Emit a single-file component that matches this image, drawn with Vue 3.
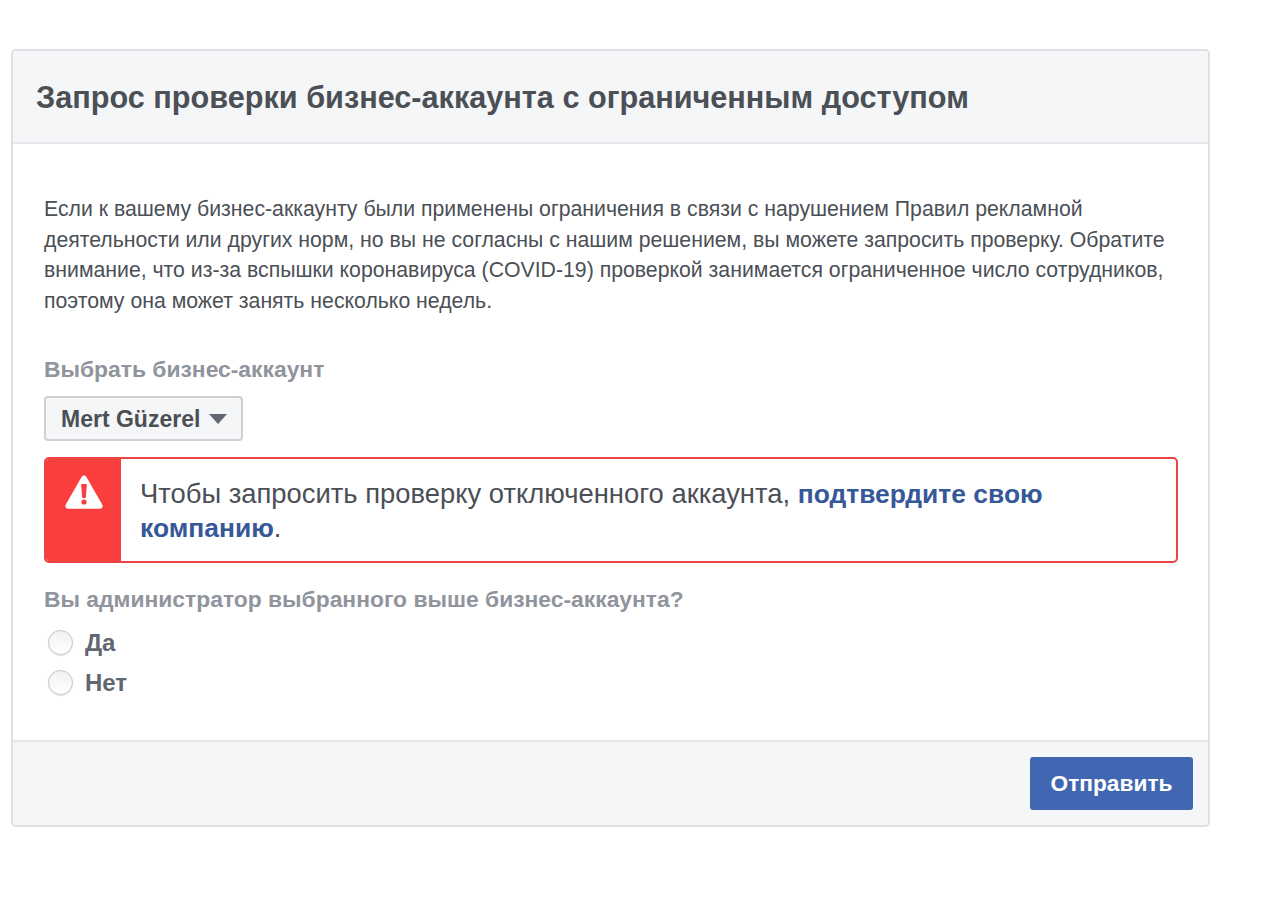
<script setup>
const options = ['Да', 'Нет']
</script>

<template>
  <div class="page">
    <section class="card">
      <header class="head"><h1>Запрос проверки бизнес-аккаунта с ограниченным доступом</h1></header>
      <div class="body">
        <p class="intro">Если к вашему бизнес-аккаунту были применены ограничения в связи с нарушением Правил рекламной<br>деятельности или других норм, но вы не согласны с нашим решением, вы можете запросить проверку. Обратите<br>внимание, что из-за вспышки коронавируса (COVID-19) проверкой занимается ограниченное число сотрудников,<br>поэтому она может занять несколько недель.</p>
        <div class="label first">Выбрать бизнес-аккаунт</div>
        <button class="select">Mert Güzerel<span class="caret"></span></button>
        <div class="alert">
          <div class="alert-icon">
            <svg width="40" height="36" viewBox="0 0 40 36">
              <path d="M20 1.500c1 0 1.800.5 2.400 1.500l15.800 27.600c1.100 2-.1 4.200-2.300 4.200H4.100c-2.200 0-3.400-2.200-2.300-4.200L17.600 3c.6-1 1.400-1.500 2.400-1.500z" fill="#fff"/>
              <path d="M17.700 10.500h4.600l-.9 13h-2.800z" fill="#fa3e3e" stroke="#fa3e3e" stroke-linejoin="round"/>
              <circle cx="20" cy="28" r="2.600" fill="#fa3e3e"/>
            </svg>
          </div>
          <div class="alert-text">Чтобы запросить проверку отключенного аккаунта, <a href="#" class="link">подтвердите свою<br>компанию</a>.</div>
        </div>
        <div class="label second">Вы администратор выбранного выше бизнес-аккаунта?</div>
        <label v-for="o in options" :key="o" class="radio"><span class="dot"></span>{{ o }}</label>
      </div>
      <footer class="foot"><button class="send">Отправить</button></footer>
    </section>
  </div>
</template>

<style>
html, body { background: #fff; }
</style>

<style scoped>
.page { padding: 49px 70px 0 11px; font-family: "Liberation Sans", Arial, sans-serif; box-sizing: border-box; height: 901px; overflow: hidden; }
.card { border: 2px solid #dddfe2; border-radius: 5px; background: #fff; height: 778px; display: flex; flex-direction: column; box-sizing: border-box; }
.head { height: 89px; padding: 2px 0 0 23px; background: #f5f6f7; border-bottom: 2px solid #e5e6e9; display: flex; align-items: center; border-radius: 3px 3px 0 0; flex: none; }
h1 { margin: 0; font-size: 30.65px; font-weight: 700; color: #4b4f56; white-space: nowrap; }
.body { flex: 1; padding: 50px 31px 0; }
.intro { margin: 0; font-size: 21.25px; line-height: 30.7px; color: #4b4f56; white-space: nowrap; }
.label { font-size: 22.85px; font-weight: 700; color: #90949c; line-height: 26px; white-space: nowrap; }
.first { margin-top: 39px; }
.select { display: flex; align-items: center; margin-top: 14px; width: 199px; height: 45px; padding: 2px 0 0 15px; border: 2px solid #ced0d4; border-radius: 4px; background: #f5f6f7; font: 700 23px "Liberation Sans", Arial, sans-serif; color: #4b4f56; box-sizing: border-box; }
.caret { margin-left: 9px; border-left: 9px solid transparent; border-right: 9px solid transparent; border-top: 10px solid #606770; }
.alert { display: flex; margin-top: 16px; width: 1134px; height: 106px; border: 2px solid #ea4444; border-radius: 5px; box-sizing: border-box; overflow: hidden; }
.alert-icon { width: 75px; background: #fa3e3e; display: flex; justify-content: center; padding-top: 15px; box-sizing: border-box; flex: none; }
.alert-text { padding: 18px 0 0 19px; font-size: 27.4px; line-height: 34px; color: #4b4f56; white-space: nowrap; }
.link { color: #365899; font-weight: 700; font-size: 26.45px; text-decoration: none; }
.second { margin-top: 23px; }
.radio { display: flex; align-items: center; height: 40px; font-size: 24px; font-weight: 700; color: #606770; padding-left: 4px; }
.radio:first-of-type { margin-top: 11px; }
.dot { width: 25px; height: 25px; border-radius: 50%; border: 1px solid #c4c6ca; background: linear-gradient(#f2f2f2, #fff); box-shadow: 0 1px 1px rgba(0,0,0,.12); box-sizing: border-box; margin-right: 12px; }
.foot { height: 85px; background: #f5f6f7; border-top: 2px solid #e5e6e9; display: flex; justify-content: flex-end; align-items: center; padding-right: 15px; box-sizing: border-box; border-radius: 0 0 3px 3px; flex: none; }
.send { width: 163px; height: 53px; background: #4267b2; color: #fff; border: 0; border-radius: 3px; font: 700 22.7px "Liberation Sans", Arial, sans-serif; }
</style>
